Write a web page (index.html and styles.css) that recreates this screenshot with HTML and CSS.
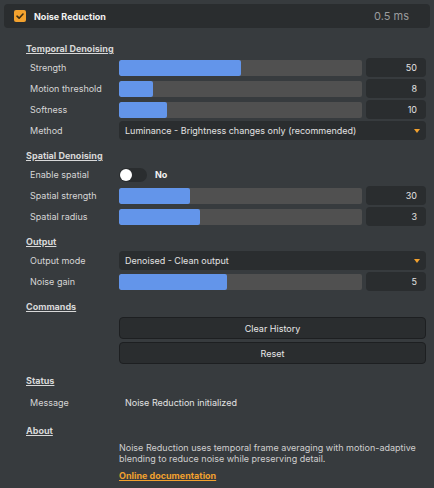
FILE: index.html
```html
<!DOCTYPE html>
<html>
<head>
<meta charset="utf-8">
<link rel="stylesheet" href="styles.css">
</head>
<body>
<div class="header">
  <span class="check"><svg width="12" height="12" viewBox="0 0 12 12"><path d="M3 6.2 L5.1 8.2 L9 4" fill="none" stroke="#3a2c14" stroke-width="1.6" stroke-linecap="round" stroke-linejoin="round"/></svg></span>
  <span class="title">Noise Reduction</span>
  <span class="time">0.5 ms</span>
</div>
<div class="content">
  <section class="sec">
    <h2 class="sec-title">Temporal Denoising</h2>
    <div class="row"><span class="label">Strength</span><div class="slider"><div class="fill" style="width:50%"></div></div><span class="val">50</span></div>
    <div class="row"><span class="label">Motion threshold</span><div class="slider"><div class="fill" style="width:14%"></div></div><span class="val">8</span></div>
    <div class="row"><span class="label">Softness</span><div class="slider"><div class="fill" style="width:19.8%"></div></div><span class="val">10</span></div>
    <div class="row"><span class="label">Method</span><div class="dropdown"><span>Luminance - Brightness changes only (recommended)</span><span class="arrow"></span></div></div>
  </section>
  <section class="sec">
    <h2 class="sec-title">Spatial Denoising</h2>
    <div class="row"><span class="label">Enable spatial</span><div class="toggle-wrap"><span class="toggle"><span class="knob"></span></span><span class="toggle-text">No</span></div></div>
    <div class="row"><span class="label">Spatial strength</span><div class="slider"><div class="fill" style="width:29.2%"></div></div><span class="val">30</span></div>
    <div class="row"><span class="label">Spatial radius</span><div class="slider"><div class="fill" style="width:33.3%"></div></div><span class="val">3</span></div>
  </section>
  <section class="sec">
    <h2 class="sec-title">Output</h2>
    <div class="row"><span class="label">Output mode</span><div class="dropdown"><span>Denoised - Clean output</span><span class="arrow"></span></div></div>
    <div class="row"><span class="label">Noise gain</span><div class="slider"><div class="fill" style="width:44.4%"></div></div><span class="val">5</span></div>
  </section>
  <section class="sec">
    <h2 class="sec-title">Commands</h2>
    <div class="row btn-row"><span class="label"></span><button class="btn">Clear History</button></div>
    <div class="row btn-row"><span class="label"></span><button class="btn">Reset</button></div>
  </section>
  <section class="sec sec-status">
    <h2 class="sec-title">Status</h2>
    <div class="row msg-row"><span class="label">Message</span><span class="msg">Noise Reduction initialized</span></div>
  </section>
  <section class="sec sec-about">
    <h2 class="sec-title">About</h2>
    <div class="about">
      <p class="desc">Noise Reduction uses temporal frame averaging with motion-adaptive blending to reduce noise while preserving detail.</p>
      <a class="link" href="#">Online documentation</a>
    </div>
  </section>
</div>
</body>
</html>
```
FILE: styles.css
```css
* { box-sizing: border-box; }
html, body {
  margin: 0;
  padding: 0;
  background: #373b3e;
  font-family: Inter, "Noto Sans", sans-serif;
  font-size: 9px;
  color: #d6d6d6;
}
.header {
  margin: 4px 4px 0 4px;
  height: 24px;
  background: #2a2d2f;
  border-radius: 4px;
  display: flex;
  align-items: center;
  padding: 0 21px 0 10px;
}
.check {
  width: 12px;
  height: 12px;
  background: #f2a12e;
  border-radius: 2px;
  display: flex;
}
.title {
  margin-left: 8px;
  font-weight: 700;
  font-size: 9px;
  color: #f2f2f2;
  flex: 1;
}
.time {
  color: #9a9c9e;
  font-size: 11px;
}
.content {
  padding: 15px 8px 0 26px;
}
.sec + .sec { margin-top: 10px; }
.sec.sec-status { margin-top: 11px; }
.sec.sec-about { margin-top: 12px; }
.sec-title {
  margin: 0 0 3px 0;
  font-size: 9px;
  line-height: 12px;
  font-weight: 700;
  text-decoration: underline;
  color: #d8d8d8;
}
.row {
  display: grid;
  grid-template-columns: 85px 1fr 60px;
  column-gap: 4px;
  align-items: center;
  height: 19px;
  margin-left: 4px;
}
.row + .row { margin-top: 2px; }
.label { color: #d6d6d6; white-space: nowrap; }
.slider {
  height: 16px;
  background: #505050;
  border-radius: 2px;
  overflow: hidden;
}
.fill {
  height: 100%;
  background: #6395ea;
  border-radius: 2px;
}
.val {
  height: 19px;
  background: #2a2d2f;
  border-radius: 4px;
  text-align: right;
  padding-right: 9px;
  line-height: 19px;
  color: #e2e2e2;
}
.dropdown {
  grid-column: 2 / 4;
  height: 19px;
  background: #2a2d2f;
  border-radius: 4px;
  display: flex;
  align-items: center;
  justify-content: space-between;
  padding: 0 6px 0 6px;
  color: #e2e2e2;
}
.arrow {
  width: 0;
  height: 0;
  border-left: 3.5px solid transparent;
  border-right: 3.5px solid transparent;
  border-top: 4px solid #f2a12e;
}
.toggle-wrap {
  grid-column: 2 / 4;
  display: flex;
  align-items: center;
}
.toggle {
  width: 28px;
  height: 14px;
  border-radius: 7px;
  background: #2a2d2f;
  display: flex;
  align-items: center;
  padding-left: 1px;
}
.knob {
  width: 12px;
  height: 12px;
  border-radius: 50%;
  background: #ffffff;
}
.toggle-text {
  margin-left: 8px;
  font-weight: 700;
  color: #f2f2f2;
}
.btn-row { height: 22px; }
.row.btn-row + .row.btn-row { margin-top: 3px; }
.sec-title + .btn-row { margin-top: 4px; }
.btn {
  grid-column: 2 / 4;
  height: 22px;
  background: #2a2d2f;
  border: 1px solid #1d1f21;
  border-radius: 4px;
  font: inherit;
  color: #e8e8e8;
  padding: 0;
}
.msg-row { height: 21px; margin-top: 5px; }
.msg {
  grid-column: 2 / 4;
  padding-left: 6px;
  color: #e2e2e2;
}
.about {
  padding-left: 93px;
  padding-top: 3px;
}
.desc {
  margin: 0;
  line-height: 10.5px;
  color: #cfcfcf;
}
.link {
  display: inline-block;
  margin-top: 6px;
  color: #f2a12e;
  font-weight: 700;
  text-decoration: underline;
}
```
